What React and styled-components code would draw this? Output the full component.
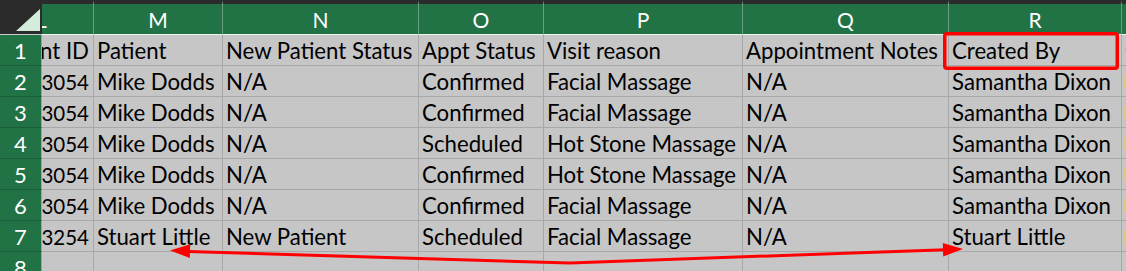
import React from "react";
import styled, { createGlobalStyle } from "styled-components";

const GlobalStyle = createGlobalStyle`
  html, body {
    margin: 0;
    padding: 0;
    background: #c6c6c6;
    overflow: hidden;
  }
  body {
    font-family: Lato, "Liberation Sans", sans-serif;
  }
`;

const columns = [
  { key: "L", width: 52, align: "end" },
  { key: "M", width: 129 },
  { key: "N", width: 196 },
  { key: "O", width: 125 },
  { key: "P", width: 199 },
  { key: "Q", width: 206 },
  { key: "R", width: 173 },
  { key: "S", width: 46 },
];

const rows = [
  ["Appointment ID", "Patient", "New Patient Status", "Appt Status", "Visit reason", "Appointment Notes", "Created By", "C"],
  ["3054", "Mike Dodds", "N/A", "Confirmed", "Facial Massage", "N/A", "Samantha Dixon", ""],
  ["3054", "Mike Dodds", "N/A", "Confirmed", "Facial Massage", "N/A", "Samantha Dixon", ""],
  ["3054", "Mike Dodds", "N/A", "Scheduled", "Hot Stone Massage", "N/A", "Samantha Dixon", ""],
  ["3054", "Mike Dodds", "N/A", "Confirmed", "Hot Stone Massage", "N/A", "Samantha Dixon", ""],
  ["3054", "Mike Dodds", "N/A", "Confirmed", "Facial Massage", "N/A", "Samantha Dixon", ""],
  ["3254", "Stuart Little", "New Patient", "Scheduled", "Facial Massage", "N/A", "Stuart Little", ""],
  ["", "", "", "", "", "", "", ""],
];

const Page = styled.div`
  position: relative;
  width: 1126px;
  height: 271px;
  overflow: hidden;
`;

const Sheet = styled.div`
  display: grid;
  grid-template-columns: 42px ${columns.map((c) => `${c.width}px`).join(" ")};
  grid-template-rows: 35px;
  grid-auto-rows: 31px;
`;

const Corner = styled.div`
  position: relative;
  background: #2b2b2b;
  border-bottom: 1px solid #c8c8c8;
  box-sizing: border-box;
`;

const CornerTriangle = styled.div`
  position: absolute;
  left: 16px;
  top: 9px;
  width: 24px;
  height: 22px;
  background: #d3ecdc;
  clip-path: polygon(100% 0, 100% 100%, 0 100%);
`;

const ColHeader = styled.div`
  box-sizing: border-box;
  border-top: 4px solid #2b2b2b;
  border-bottom: 1px solid #f2f2f2;
  border-right: 1px solid ${({ $last }) => ($last ? "#217346" : "#6a9f80")};
  background: #217346;
  color: #ffffff;
  font-size: 21px;
  display: flex;
  align-items: center;
  justify-content: center;
  padding-top: 1px;
  overflow: hidden;
  white-space: nowrap;
`;

const ScrolledLetter = styled.span`
  flex: none;
  width: 102px;
  margin-left: -52px;
  text-align: center;
`;

const RowHeader = styled.div`
  box-sizing: border-box;
  background: #217346;
  color: #ffffff;
  font-size: 22px;
  border-bottom: 1px solid #1a5e39;
  border-right: 1px solid #9aa69f;
  display: flex;
  align-items: center;
  justify-content: center;
  padding-top: 1px;
`;

const Cell = styled.div`
  box-sizing: border-box;
  background: #c6c6c6;
  border-right: 1px solid #a8a8a8;
  border-bottom: 1px solid #a8a8a8;
  color: #000000;
  font-size: ${({ $numeric }) => ($numeric ? "20.5px" : "22.2px")};
  display: flex;
  align-items: center;
  justify-content: ${({ $align }) => ($align === "end" ? "flex-end" : "flex-start")};
  padding: 1px ${({ $align }) => ($align === "end" ? "4px" : "0")} 0
    ${({ $align }) => ($align === "end" ? "0" : "3px")};
  white-space: nowrap;
  overflow: hidden;
`;

const EdgeMark = styled.span`
  width: 2px;
  height: 13px;
  margin-left: -1px;
  background: #d8cb86;
`;

const Overlay = styled.svg`
  position: absolute;
  left: 0;
  top: 0;
  pointer-events: none;
`;

function Annotations() {
  return (
    <Overlay width="1126" height="271" viewBox="0 0 1126 271">
      <rect
        x="944.75"
        y="33.75"
        width="172.5"
        height="34.5"
        rx="2"
        fill="none"
        stroke="#ff0000"
        strokeWidth="3.5"
      />
      <path d="M570 263 L188 251.5" stroke="#ff0000" strokeWidth="3" fill="none" />
      <polygon points="170,250.5 190.2,244.3 189.8,257.9" fill="#ff0000" />
      <path d="M570 263 L945 249.7" stroke="#ff0000" strokeWidth="3" fill="none" />
      <polygon points="963,249 942.8,242.9 943.2,256.5" fill="#ff0000" />
    </Overlay>
  );
}

export default function App() {
  return (
    <>
      <GlobalStyle />
      <Page>
        <Sheet>
          <Corner>
            <CornerTriangle />
          </Corner>
          {columns.map((c, i) => (
            <ColHeader key={c.key} $last={i === columns.length - 1}>
              {c.key === "L" ? <ScrolledLetter>L</ScrolledLetter> : c.key === "S" ? "" : c.key}
            </ColHeader>
          ))}
          {rows.map((row, r) => (
            <React.Fragment key={r}>
              <RowHeader>{r + 1}</RowHeader>
              {row.map((value, c) => {
                const col = columns[c];
                if (col.key === "S") {
                  return (
                    <Cell key={c}>
                      {r === 0 ? <span>C</span> : r < 7 ? <EdgeMark /> : null}
                    </Cell>
                  );
                }
                return (
                  <Cell key={c} $align={col.align} $numeric={/^\d+$/.test(value)}>
                    {value}
                  </Cell>
                );
              })}
            </React.Fragment>
          ))}
        </Sheet>
        <Annotations />
      </Page>
    </>
  );
}
